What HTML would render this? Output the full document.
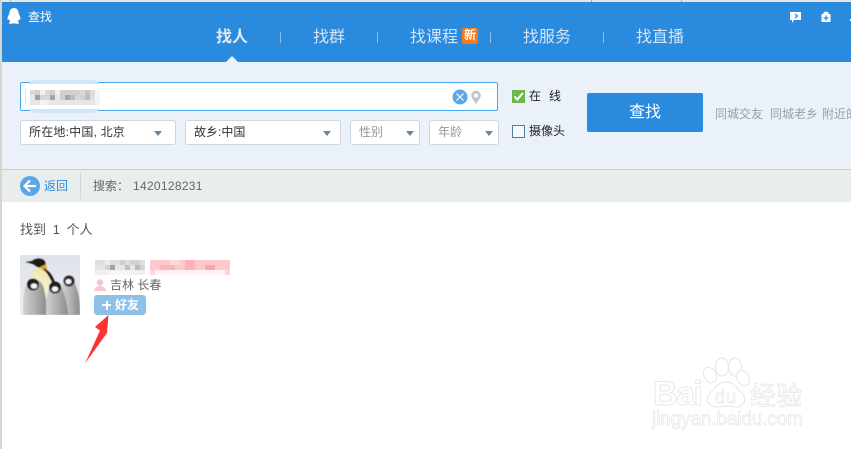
<!DOCTYPE html>
<html><head><meta charset="utf-8"><style>
html,body{margin:0;padding:0;background:#fff}
body{position:relative;width:851px;height:449px;overflow:hidden;font-family:"Liberation Sans","Noto Sans CJK SC",sans-serif;font-size:12px;color:#333}
.a{position:absolute;white-space:nowrap}
.nav{top:27px;height:22px;line-height:22px;font-size:16px;color:#d3e5f7}
.sep{top:32px;width:1px;height:11px;background:#8dbfec}
.sel{height:23px;background:#fff;border:1px solid #cfd6df;border-radius:3px;line-height:23px;box-sizing:content-box;color:#333}
.sel span{position:absolute;left:8px;top:0}
.sel i{position:absolute;top:10px;width:0;height:0;border-left:4px solid transparent;border-right:4px solid transparent;border-top:5px solid #5f87a6}
</style></head><body>
<div class="a" style="left:0;top:0;width:851px;height:2px;background:#e8e6e0"></div>
<div class="a" style="left:10px;top:0;width:1px;height:2px;background:#bbb"></div>
<div class="a" style="left:591px;top:0;width:1px;height:2px;background:#aaa"></div>
<div class="a" style="left:681px;top:0;width:1px;height:2px;background:#aaa"></div>
<div class="a" style="left:0;top:0;width:2px;height:449px;background:#d6d6cf"></div>
<div class="a" style="left:2px;top:2px;width:849px;height:60px;background:#2a8ade"></div>
<div class="a" style="left:2px;top:62px;width:849px;height:107px;background:#ebf1f9"></div>
<div class="a" style="left:2px;top:169px;width:849px;height:1px;background:#cbcdce"></div>
<div class="a" style="left:2px;top:170px;width:849px;height:32px;background:#e9edee"></div>

<svg class="a" style="left:6px;top:7px" width="16" height="18" viewBox="0 0 16 18"><path d="M8 1C4.800 1 3.400 3.500 3.400 6.500C2.500 8 1.500 10 1.500 12C1.500 13 2.200 13 3 12.300C3.300 13.300 3.800 14 4.300 14.500C3.300 15 2.800 15.500 3 16.300C3.500 17 6 17 8 16.300C10 17 12.500 17 13 16.300C13.200 15.500 12.700 15 11.700 14.500C12.200 14 12.700 13.300 13 12.300C13.800 13 14.500 13 14.500 12C14.500 10 13.500 8 12.600 6.500C12.600 3.500 11.200 1 8 1Z" fill="#fff"/></svg>
<div class="a" style="left:28px;top:9px;font-size:12px;line-height:16px;color:#fff">查找</div>

<div class="a nav" style="left:216px;color:#dfeaf5;font-weight:bold">找人</div>
<div class="a sep" style="left:280px"></div>
<div class="a nav" style="left:313px">找群</div>
<div class="a sep" style="left:377px"></div>
<div class="a nav" style="left:410px">找课程</div>
<div class="a" style="left:462px;top:28px;width:16px;height:16px;background:#f47a1c;border-radius:2px;color:#fff;font-size:12px;line-height:15px;text-align:center;font-weight:bold">新</div>
<div class="a sep" style="left:490px"></div>
<div class="a nav" style="left:523px">找服务</div>
<div class="a sep" style="left:603px"></div>
<div class="a nav" style="left:636px">找直播</div>
<div class="a" style="left:226px;top:56px;width:0;height:0;border-left:6px solid transparent;border-right:6px solid transparent;border-bottom:6px solid #ebf1f9"></div>

<svg class="a" style="left:789px;top:11px" width="14" height="13" viewBox="0 0 14 13"><path d="M1 1H12V9H5L3 12V9H1Z" fill="#fff"/><path d="M6 3L8.500 5L6 7" fill="none" stroke="#2a8ade" stroke-width="1.200"/></svg>
<svg class="a" style="left:820px;top:11px" width="12" height="12" viewBox="0 0 12 12"><path d="M3.500 3V2Q3.500 .8 5 .8H7Q8.500 .8 8.500 2V3H10.500V11H1.500V3Z" fill="#fff"/><path d="M6 4.500V9.500M3.500 7H8.500" stroke="#2a8ade" stroke-width="1.300"/></svg>
<div class="a" style="left:850px;top:19px;width:1px;height:2px;background:#fff"></div>

<!-- search input -->
<div class="a" style="left:20px;top:82px;width:476px;height:27px;background:#fff;border:1px solid #46a6ee;border-radius:2px"></div>
<div class="a" style="left:25px;top:80px;width:78px;height:33px;background:#cfe5f8;border-radius:12px"></div>
<div class="a" style="left:26px;top:84px;width:80px;height:25px;background:#fff"></div>
<svg class="a" style="left:30px;top:90px" width="70" height="15" viewBox="0 0 14 3" shape-rendering="crispEdges">
<g fill="#d8d8d8"><rect x="0" y="0" width="1" height="1"/><rect x="3" y="0" width="1" height="1"/><rect x="6" y="0" width="4" height="1" fill="#d0d0d0"/><rect x="10" y="0" width="1" height="1"/></g>
<rect x="1" y="0" width="1" height="1" fill="#d0d0d0"/><rect x="2" y="0" width="1" height="1" fill="#f0f0f0"/><rect x="4" y="0" width="1" height="1" fill="#cfcfcf"/><rect x="5" y="0" width="1" height="1" fill="#f0f0f0"/><rect x="11" y="0" width="1" height="1" fill="#c6c6c6"/><rect x="12" y="0" width="1" height="1" fill="#dcdcdc"/><rect x="13" y="0" width="1" height="1" fill="#f5f5f5"/>
<rect x="0" y="1" width="1" height="1" fill="#e8e8e8"/><rect x="1" y="1" width="1" height="1" fill="#a0a0a0"/><rect x="2" y="1" width="1" height="1" fill="#d5d5d5"/><rect x="3" y="1" width="1" height="1" fill="#d8d8d8"/><rect x="4" y="1" width="1" height="1" fill="#a6a6a6"/><rect x="5" y="1" width="1" height="1" fill="#e8e8e8"/><rect x="6" y="1" width="1" height="1" fill="#d0d0d0"/><rect x="7" y="1" width="1" height="1" fill="#a8a8a8"/><rect x="8" y="1" width="1" height="1" fill="#bcbcbc"/><rect x="9" y="1" width="1" height="1" fill="#d8d8d8"/><rect x="10" y="1" width="1" height="1" fill="#d0d0d0"/><rect x="11" y="1" width="1" height="1" fill="#bbb"/><rect x="12" y="1" width="1" height="1" fill="#dedede"/><rect x="13" y="1" width="1" height="1" fill="#f3f3f3"/>
<rect x="0" y="2" width="14" height="1" fill="#e6e6e6"/><rect x="2" y="2" width="1" height="1" fill="#f4f4f4"/><rect x="3" y="2" width="1" height="1" fill="#eee"/><rect x="13" y="2" width="1" height="1" fill="#f0f0f0"/>
</svg>
<svg class="a" style="left:452px;top:89px" width="16" height="16" viewBox="0 0 16 16"><circle cx="8" cy="8" r="7.500" fill="#5ba6e6"/><path d="M4.500 4.500L11.500 11.500M11.500 4.500L4.500 11.500" stroke="#fff" stroke-width="1.100"/></svg>
<svg class="a" style="left:470px;top:90px" width="12" height="15" viewBox="0 0 12 15"><path d="M6 14L2.300 8.500A4.800 4.800 0 1 1 9.700 8.500Z" fill="#bcc8cf"/><circle cx="6" cy="5.500" r="2" fill="#fff"/></svg>

<!-- selects -->
<div class="a sel" style="left:20px;top:120px;width:154px"><span style="letter-spacing:.2px">所在地:中国, 北京</span><i style="left:133px"></i></div>
<div class="a sel" style="left:185px;top:120px;width:154px"><span>故乡:中国</span><i style="left:137px"></i></div>
<div class="a sel" style="left:350px;top:120px;width:68px"><span style="color:#999">性别</span><i style="left:55px"></i></div>
<div class="a sel" style="left:429px;top:120px;width:68px"><span style="color:#999">年龄</span><i style="left:55px"></i></div>

<!-- checkboxes -->
<svg class="a" style="left:512px;top:90px" width="13" height="13" viewBox="0 0 13 13"><rect width="13" height="13" fill="#6fb64a"/><path d="M2.500 6.500L5.300 9.500L10.800 3" fill="none" stroke="#fff" stroke-width="2"/></svg>
<div class="a" style="left:529px;top:88px;line-height:16px;color:#222">在</div>
<div class="a" style="left:549px;top:88px;line-height:16px;color:#222">线</div>
<div class="a" style="left:512px;top:125px;width:11px;height:11px;background:#f5f8fc;border:1px solid #4b7ea5"></div>
<div class="a" style="left:529px;top:123px;line-height:16px;color:#222">摄像头</div>

<div class="a" style="left:587px;top:93px;width:116px;height:39px;background:#2a8ade;border-radius:2px;color:#fff;font-size:16px;line-height:39px;text-align:center">查找</div>
<div class="a" style="left:715px;top:106px;line-height:16px;color:#9a9fa5">同城交友</div>
<div class="a" style="left:770px;top:106px;line-height:16px;color:#9a9fa5">同城老乡</div>
<div class="a" style="left:822px;top:106px;line-height:16px;color:#9a9fa5">附近的人</div>

<!-- bar -->
<svg class="a" style="left:20px;top:176px" width="20" height="20" viewBox="0 0 20 20"><circle cx="10" cy="10" r="10" fill="#5ba6e6"/><path d="M10 4.500L4.500 10L10 15.500M5 10H16" fill="none" stroke="#fff" stroke-width="2.200"/></svg>
<div class="a" style="left:44px;top:178px;line-height:16px;color:#2a8ade">返回</div>
<div class="a" style="left:80px;top:173px;width:1px;height:26px;background:#d2d5d6"></div>
<div class="a" style="left:93px;top:178px;line-height:16px;color:#666">搜索：</div>
<div class="a" style="left:133px;top:178px;line-height:16px;color:#666;letter-spacing:.3px">1420128231</div>

<div class="a" style="left:20px;top:222px;line-height:16px;font-size:13px;word-spacing:3px;color:#555">找到 1 个人</div>

<!-- avatar -->
<svg class="a" style="left:20px;top:255px" width="60" height="60" viewBox="0 0 60 60">
<defs>
<filter id="b"><feGaussianBlur stdDeviation=".5"/></filter>
<linearGradient id="bg" x1="0" y1="0" x2="0" y2="1"><stop offset="0" stop-color="#e0e2ec"/><stop offset="1" stop-color="#eeeef2"/></linearGradient>
<linearGradient id="ch" x1="0" y1="0" x2="1" y2="0"><stop offset="0" stop-color="#d2d2d2"/><stop offset=".5" stop-color="#b0b0b0"/><stop offset="1" stop-color="#8a8a8a"/></linearGradient>
<linearGradient id="bd" x1="0" y1="0" x2="0" y2="1"><stop offset="0" stop-color="#f0e6a8"/><stop offset="1" stop-color="#f6f4e6"/></linearGradient>
</defs>
<rect width="60" height="60" fill="url(#bg)"/>
<g filter="url(#b)">
<ellipse cx="21" cy="28" rx="10.500" ry="17" fill="url(#bd)"/>
<path d="M5 7L12 6Q15 3.500 19 3.500Q25 4 25.500 8Q26 12 22 13Q17 13 14 9.500Q10 8 5 7Z" fill="#1f1c18"/>
<path d="M20 12L26 9L27 15L23 16Z" fill="#dca62c"/>
<path d="M24 13Q32 17 36 30L33 30Q29 20 24 15Z" fill="#1b1b1b"/>
<path d="M43 60Q41 36 43 27Q48 21 53 25Q60 36 60 58V60Z" fill="url(#ch)"/>
<path d="M3 60Q3 40 5 33Q8 24 15 24Q22 26 24 34Q27 46 27 60Z" fill="url(#ch)"/>
<path d="M26 60Q26 42 28 36Q31 27 36 27Q41 28 43 36Q47 46 48 60Z" fill="url(#ch)"/>
<circle cx="13" cy="29.500" r="6" fill="#1f1f22"/><ellipse cx="14" cy="31" rx="3.300" ry="2.600" fill="#f2f2f2"/>
<circle cx="35" cy="32.500" r="6" fill="#1f1f22"/><ellipse cx="35" cy="34" rx="3.300" ry="2.600" fill="#f2f2f2"/>
<circle cx="49" cy="26" r="5.500" fill="#26262a"/><ellipse cx="48.500" cy="26.500" rx="3" ry="2.600" fill="#f2f2f2"/>
</g></svg>

<!-- blurred name -->
<svg class="a" style="left:95px;top:260px" width="135" height="15" viewBox="0 0 27 3" shape-rendering="crispEdges">
<rect x="0" y="0" width="10" height="1" fill="#dedede"/><rect x="2" y="0" width="1" height="1" fill="#eee"/><rect x="5" y="0" width="1" height="1" fill="#d0d0d0"/><rect x="7" y="0" width="2" height="1" fill="#d2d2d2"/>
<rect x="0" y="1" width="10" height="1" fill="#e6e6e6"/><rect x="3" y="1" width="1" height="1" fill="#a3a3a3"/><rect x="2" y="1" width="1" height="1" fill="#d5d5d5"/><rect x="6" y="1" width="1" height="1" fill="#c0c0c0"/><rect x="8" y="1" width="1" height="1" fill="#bbb"/><rect x="9" y="1" width="1" height="1" fill="#d5d5d5"/>
<rect x="0" y="2" width="10" height="1" fill="#f0f0f0"/><rect x="3" y="2" width="4" height="1" fill="#f7f7f7"/>
<rect x="11" y="0" width="16" height="2" fill="#fdc9cc"/><rect x="13" y="1" width="3" height="1" fill="#fdb4b9"/><rect x="15" y="0" width="2" height="1" fill="#fdd8da"/><rect x="18" y="0" width="2" height="2" fill="#fcb2b7"/><rect x="22" y="1" width="2" height="1" fill="#fea5aa"/><rect x="11" y="2" width="16" height="1" fill="#fff2f3"/><rect x="11" y="2" width="1" height="1" fill="#fdd5d8"/><rect x="26" y="2" width="1" height="1" fill="#fdd5d8"/>
</svg>

<svg class="a" style="left:94px;top:279px" width="12" height="12" viewBox="0 0 12 12"><circle cx="6" cy="3.500" r="3.200" fill="#f6c6c8"/><path d="M0 12Q1 7 6 7Q11 7 12 12Z" fill="#f6c6c8"/></svg>
<div class="a" style="left:110px;top:278px;line-height:15px;color:#666">吉林 长春</div>

<div class="a" style="left:94px;top:295px;width:52px;height:20px;background:#8fc0e8;border-radius:3px"></div>
<div class="a" style="left:102px;top:304px;width:9px;height:2px;background:#fff"></div>
<div class="a" style="left:105.500px;top:300.500px;width:2px;height:9px;background:#fff"></div>
<div class="a" style="left:115px;top:297px;line-height:16px;color:#fff;font-weight:bold">好友</div>

<svg class="a" style="left:84px;top:315px" width="26" height="50" viewBox="0 0 26 50"><path d="M24.500 0L11 12L16 15.500L1 48.500L23 18Z" fill="#fb3333"/></svg>

<!-- watermark -->
<svg class="a" style="left:650px;top:355px" width="160" height="80" viewBox="0 0 160 80">
<g fill="#fff" stroke="#e9e9e9" stroke-width="1.200">
<ellipse cx="60" cy="20" rx="6" ry="8" transform="rotate(-30 60 20)"/>
<ellipse cx="72" cy="12" rx="6.500" ry="9"/>
<ellipse cx="85" cy="12" rx="6.500" ry="9"/>
<ellipse cx="93" cy="23" rx="6" ry="8" transform="rotate(-25 93 23)"/>
<path d="M76 27C68 27 67 32 61 37C54 43 58 52 67 52C71 52 73 51 76 51C79 51 82 52 86 52C95 52 98 43 91 37C85 32 84 27 76 27Z"/>
</g>
<text x="3" y="50" font-family="Liberation Sans" font-size="34" font-weight="bold" fill="#fff" stroke="#e9e9e9" stroke-width="1" textLength="50">Bai</text>
<text x="65" y="48" font-family="Liberation Sans" font-size="18" fill="#fff" stroke="#e6e6e6" stroke-width=".7" textLength="21">du</text>
<text x="100" y="50" font-family="Noto Sans CJK SC" font-size="26" fill="#fff" stroke="#e6e6e6" stroke-width=".8">经验</text>
<text x="2" y="70" font-family="Liberation Sans" font-size="19" fill="#fff" stroke="#e6e6e6" stroke-width=".7" textLength="151">jingyan.baidu.com</text>
</svg>
</body></html>
